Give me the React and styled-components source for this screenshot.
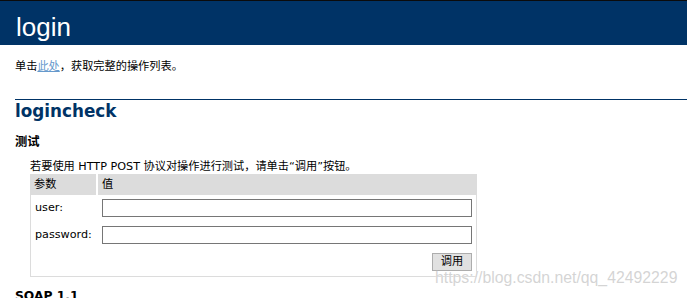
import React from "react";
import styled, { createGlobalStyle } from "styled-components";

const Global = createGlobalStyle`
  html, body { margin: 0; padding: 0; background: #fff; }
  body {
    font-family: "DejaVu Sans", "Noto Sans CJK SC", sans-serif;
    color: #000;
    overflow: hidden;
  }
`;

const Page = styled.div`
  position: relative;
  width: 687px;
  height: 298px;
  overflow: hidden;
`;

const Banner = styled.h1`
  margin: 0;
  border-top: 1px solid #0b0b0b;
  background: #003366;
  color: #fff;
  font-family: "Liberation Sans", "Noto Sans CJK SC", sans-serif;
  font-weight: normal;
  font-size: 26px;
  line-height: 31px;
  padding: 11px 0 2px 16px;
`;

const Content = styled.div`
  padding-left: 30px;
  font-size: 11.2px;
`;

const Intro = styled.p`
  margin: 14px 0 0 -15px;
  line-height: 16px;
`;

const Link = styled.a`
  color: #6699cc;
  text-decoration: underline;
`;

const OpHeading = styled.h2`
  margin: 24px 0 0 -15px;
  border-top: 1px solid #003366;
  padding-top: 1px;
  color: #003366;
  font-size: 16.8px;
  font-weight: bold;
  line-height: 20px;
`;

const SubHeading = styled.h3`
  margin: ${(p) => p.$top}px 0 0 -15px;
  font-size: 12.3px;
  font-weight: bold;
  line-height: 16px;
`;

const Note = styled.p`
  margin: 9px 0 0;
  line-height: 15px;
`;

const Form = styled.div`
  width: 445px;
  border: 1px solid #dcdcdc;
  border-top: 0;
  display: grid;
  grid-template-columns: 65px 1fr;
  column-gap: 2px;
`;

const HeadCell = styled.div`
  background: #dcdcdc;
  height: 21px;
  line-height: 21px;
  padding-left: 4px;
  margin-left: ${(p) => (p.$first ? "-1px" : "0")};
  margin-right: ${(p) => (p.$last ? "-1px" : "0")};
`;

const Body = styled.div`
  grid-column: 1 / -1;
  display: grid;
  grid-template-columns: 65px 1fr;
  column-gap: 2px;
  row-gap: 9px;
  grid-auto-rows: 18px;
  padding: 4px 0 5px;
`;

const Label = styled.div`
  padding-left: 4px;
  line-height: 18px;
`;

const Field = styled.div`
  padding: 0 4px;
  display: flex;
  justify-content: flex-end;
`;

const Input = styled.input`
  box-sizing: border-box;
  width: 100%;
  height: 18px;
  margin: 0;
  border: 1px solid #767676;
  background: #fff;
  padding: 0 2px;
  font: inherit;
`;

const Button = styled.button`
  box-sizing: border-box;
  width: 40px;
  height: 18px;
  margin: 0;
  padding: 0;
  background: #e1e1e1;
  border: 1px solid #adadad;
  font-family: "DejaVu Sans", "Noto Sans CJK SC", sans-serif;
  font-size: 11.2px;
  line-height: 16px;
  color: #000;
`;

const Watermark = styled.div`
  position: absolute;
  left: 435px;
  top: 269px;
  font-family: "Liberation Sans", sans-serif;
  font-size: 15.8px;
  line-height: 18px;
  color: rgba(205, 205, 205, 0.85);
  text-shadow: 0 0 1px #fff;
  white-space: nowrap;
`;

export default function App() {
  return (
    <Page>
      <Global />
      <Banner>login</Banner>
      <Content>
        <Intro>
          单击<Link href="#">此处</Link>，获取完整的操作列表。
        </Intro>
        <OpHeading>logincheck</OpHeading>
        <SubHeading $top={13}>测试</SubHeading>
        <Note>若要使用 HTTP POST 协议对操作进行测试，请单击“调用”按钮。</Note>
        <Form>
          <HeadCell $first>参数</HeadCell>
          <HeadCell $last>值</HeadCell>
          <Body>
            <Label>user:</Label>
            <Field>
              <Input type="text" />
            </Field>
            <Label>password:</Label>
            <Field>
              <Input type="text" />
            </Field>
            <Label />
            <Field>
              <Button type="button">调用</Button>
            </Field>
          </Body>
        </Form>
        <SubHeading $top={11}>SOAP 1.1</SubHeading>
      </Content>
      <Watermark>https://blog.csdn.net/qq_42492229</Watermark>
    </Page>
  );
}
